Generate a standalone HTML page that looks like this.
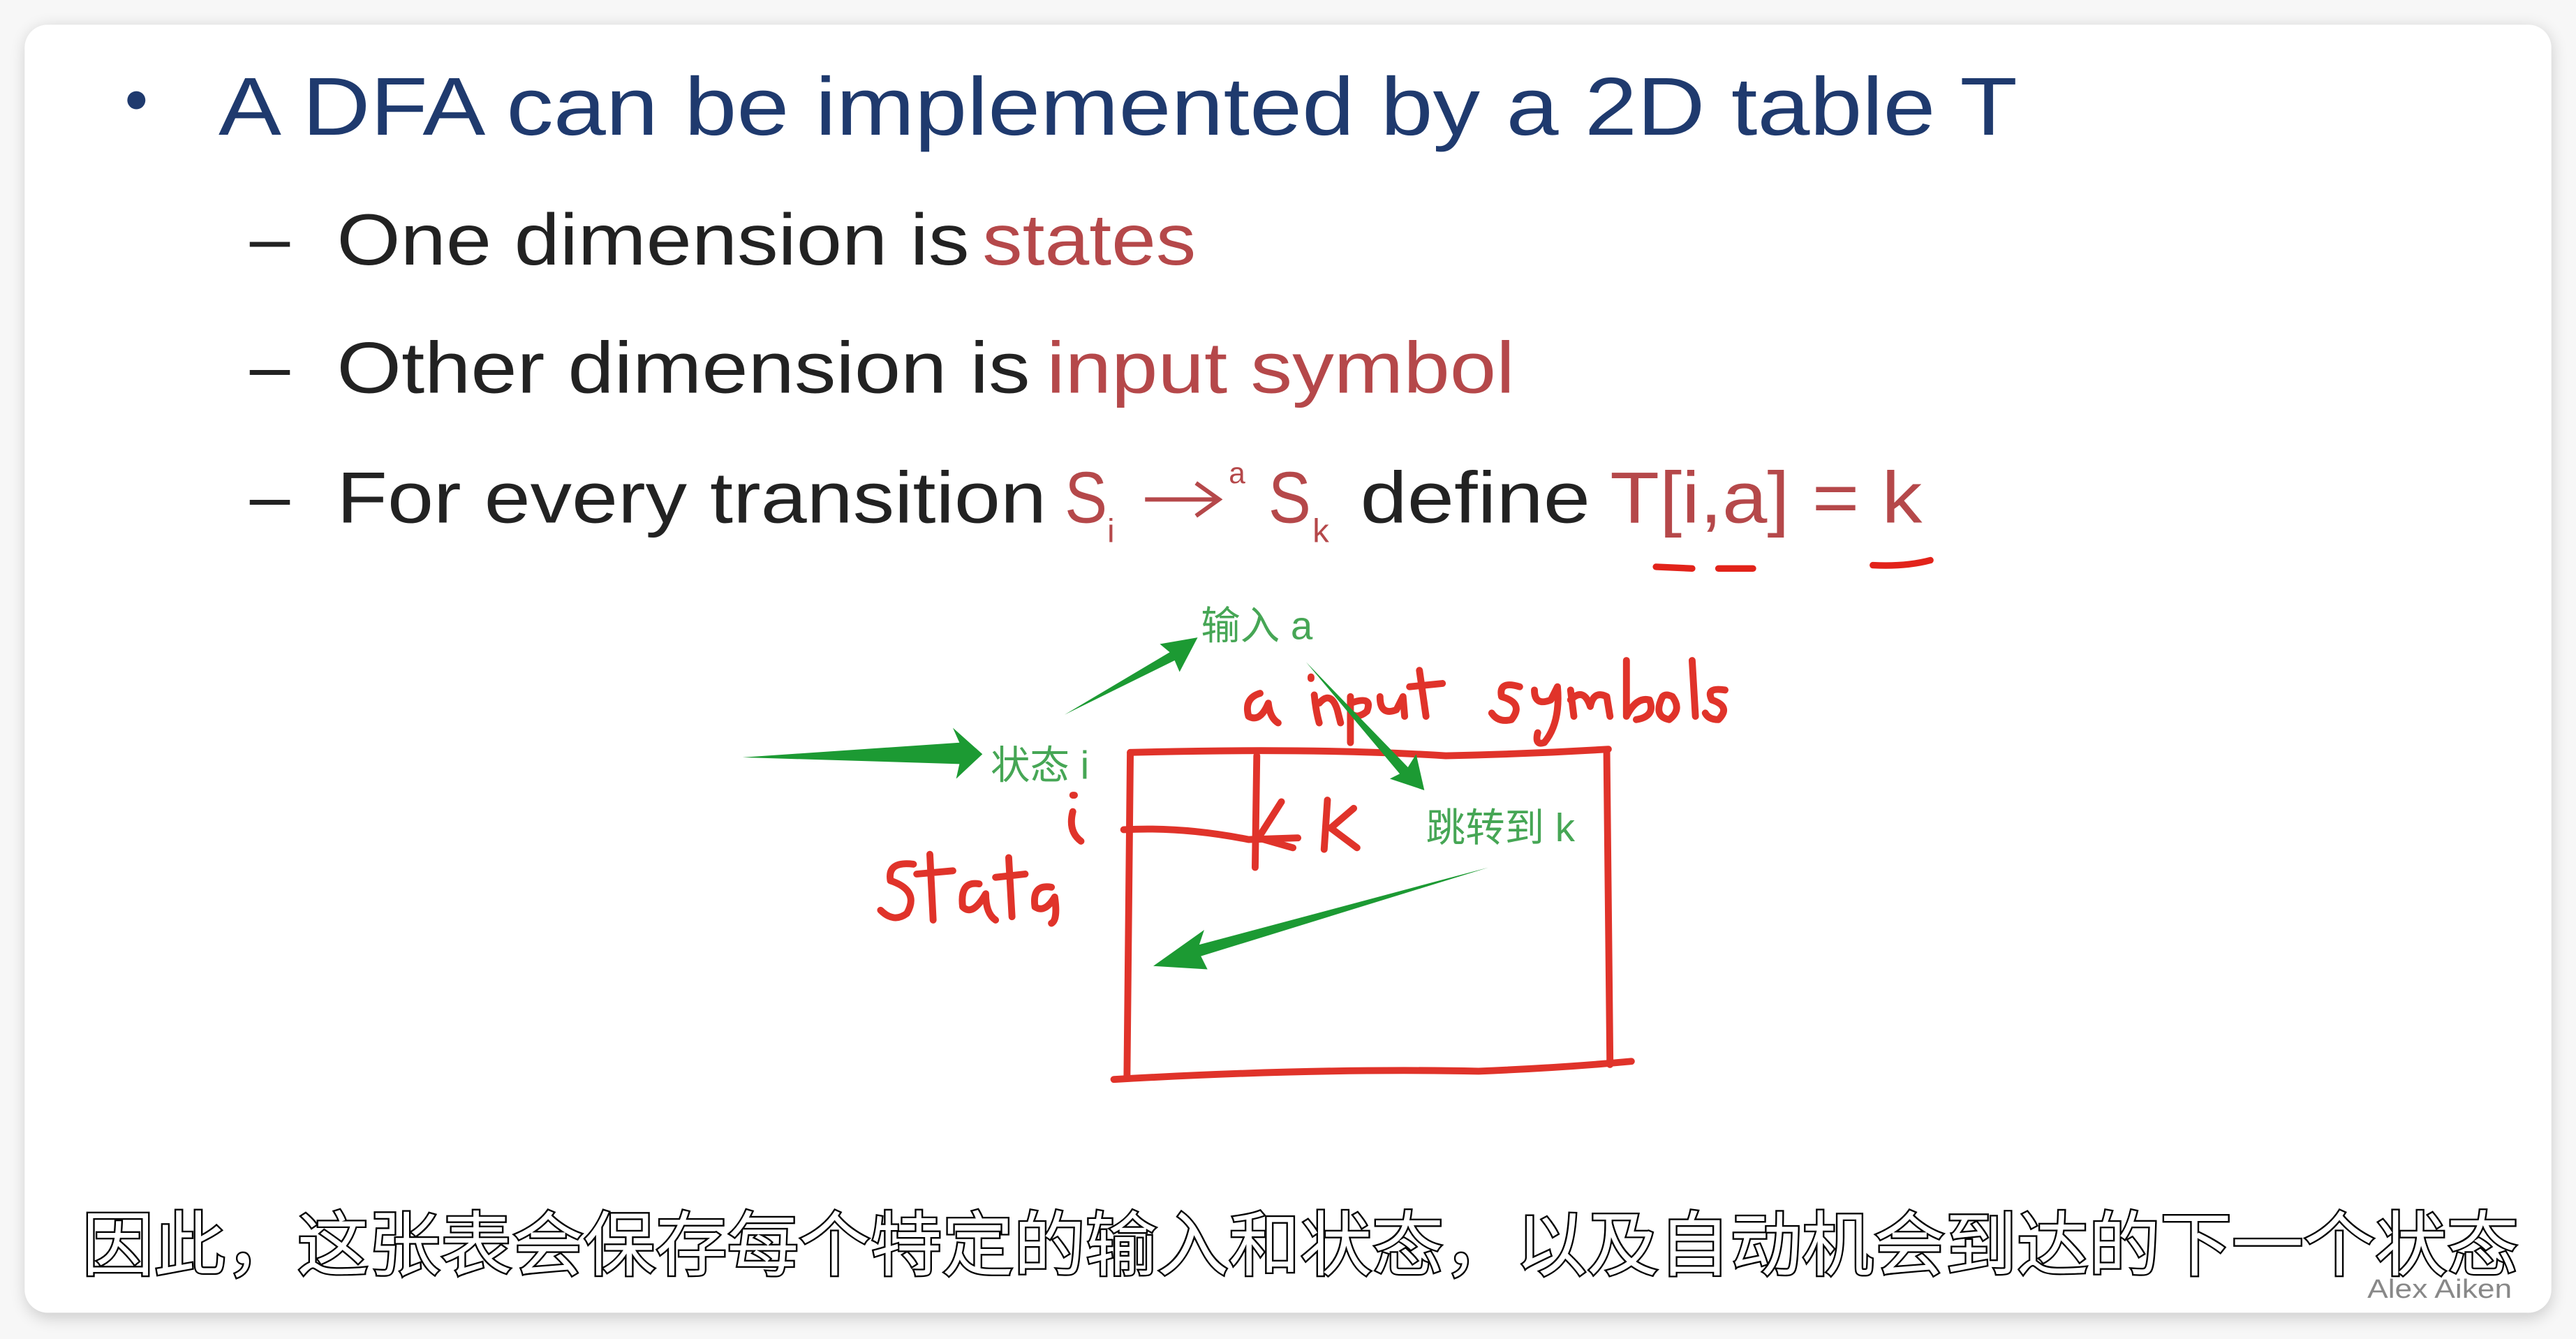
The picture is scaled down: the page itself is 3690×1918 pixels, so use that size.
<!DOCTYPE html>
<html><head><meta charset="utf-8"><style>
html,body{margin:0;padding:0;background:#fff;width:3690px;height:1918px;overflow:hidden}
svg{display:block}
</style></head><body>
<svg width="3690" height="1918" viewBox="0 0 1568 815" xmlns="http://www.w3.org/2000/svg">
<defs>
<filter id="sh" x="-5%" y="-5%" width="110%" height="110%"><feGaussianBlur stdDeviation="5"/></filter>
</defs>
<rect width="1568" height="815" fill="#f7f7f7"/>
<rect x="16" y="17" width="1537" height="785" rx="14" fill="#000" opacity="0.18" filter="url(#sh)"/>
<rect x="15" y="15" width="1538" height="784" rx="14" fill="#fff"/>

<g font-family="Liberation Sans, sans-serif">
<circle cx="83" cy="61" r="5.5" fill="#1f3a6e"/>
<text x="133" y="82" font-size="50" fill="#1f3a6e" textLength="1095" lengthAdjust="spacingAndGlyphs">A DFA can be implemented by a 2D table T</text>

<text x="152" y="160" font-size="44" fill="#222">–</text>
<text x="205" y="161" font-size="44" fill="#222" textLength="385" lengthAdjust="spacingAndGlyphs">One dimension is</text>
<text x="598" y="161" font-size="44" fill="#b5484a" textLength="130" lengthAdjust="spacingAndGlyphs">states</text>

<text x="152" y="238" font-size="44" fill="#222">–</text>
<text x="205" y="239" font-size="44" fill="#222" textLength="422" lengthAdjust="spacingAndGlyphs">Other dimension is</text>
<text x="637" y="239" font-size="44" fill="#b5484a" textLength="285" lengthAdjust="spacingAndGlyphs">input symbol</text>

<text x="152" y="317" font-size="44" fill="#222">–</text>
<text x="205" y="318" font-size="44" fill="#222" textLength="432" lengthAdjust="spacingAndGlyphs">For every transition</text>
<text x="648" y="318" font-size="44" fill="#b5484a" textLength="26" lengthAdjust="spacingAndGlyphs">S</text>
<text x="674" y="330" font-size="20" fill="#b5484a">i</text>
<path d="M697 304 L740 304 M728 294 L742 304 L728 314" stroke="#b5484a" stroke-width="2.6" fill="none"/>
<text x="748" y="294" font-size="18" fill="#b5484a">a</text>
<text x="772" y="318" font-size="44" fill="#b5484a" textLength="26" lengthAdjust="spacingAndGlyphs">S</text>
<text x="799" y="330" font-size="20" fill="#b5484a">k</text>
<text x="828" y="318" font-size="44" fill="#222" textLength="140" lengthAdjust="spacingAndGlyphs">define</text>
<text x="980" y="318" font-size="44" fill="#b5484a" textLength="190" lengthAdjust="spacingAndGlyphs">T[i,a] = k</text>
</g>

<g stroke="#e2231a" stroke-width="4" stroke-linecap="round" fill="none">
<path d="M1008 345 L1030 346"/><path d="M1046 346 L1067 346"/><path d="M1140 344 Q1160 345 1175 341"/>
</g>

<g stroke="#e0332a" stroke-width="4.2" stroke-linecap="round" stroke-linejoin="round" fill="none">
<path d="M688 458 Q800 455 880 460 Q930 459 979 456"/>
<path d="M688 458 L686 655"/>
<path d="M978 457 L980 648"/>
<path d="M678 657 Q800 650 900 652 Q950 650 993 646"/>
<path d="M765 460 L764 528"/>
<path d="M684 505 Q720 503 760 511 L790 510"/>
<path d="M780 488 L766 510 L787 516"/>
<path d="M808 487 L806 517 M824 492 L810 504 L826 516"/>
<path d="M654 484 L653 484 M653 494 Q650 506 658 512"/>
<path d="M767 422 Q757 425 760 436 Q767 440 772 428 Q773 437 778 440"/>
<path d="M798 412 L798 413 M800 423 Q801 433 803 440 M803 428 Q810 420 814 432 L816 440 M822 424 L822 452 M822 428 Q836 423 832 433 Q826 438 822 434 M840 424 Q840 436 850 432 L854 424 L855 436 M864 408 Q866 422 868 436 M858 418 L878 416"/>
<path d="M925 418 Q912 414 914 424 Q928 428 920 438 Q912 440 908 434 M934 420 Q934 430 944 426 L948 418 Q950 440 940 452 Q934 454 936 446 M956 420 L958 436 M956 426 Q964 418 968 430 Q970 420 978 424 L980 436 M990 402 L990 436 Q996 424 1004 426 Q1008 436 996 438 M1012 424 Q1006 436 1016 438 Q1024 432 1018 424 Q1014 422 1012 424 M1030 402 L1032 436 M1050 420 Q1038 418 1042 426 Q1054 430 1046 438 Q1040 438 1038 434"/>
<path d="M556 526 Q540 524 542 536 Q560 542 552 556 Q544 562 536 554 M566 520 L568 560 M558 532 L580 530 M596 538 Q584 536 586 552 Q592 558 600 544 Q600 556 606 560 M614 522 L616 558 M606 534 L624 532 M640 540 Q628 538 630 552 Q636 556 642 546 Q644 560 640 562"/>
</g>

<g fill="#1c9a33">
<path d="M452 461 L584 452 L580 443 L598 459 L582 474 L584 465 Z"/>
<path d="M648 435 L712 397 L706 392 L729 388 L718 409 L715 402 Z"/>
<path d="M795 403 L852 471 L846 474 L867 481 L862 459 L857 467 Z"/>
<path d="M906 528 L730 575 L733 566 L702 588 L735 590 L731 582 Z"/>
</g>

<g font-family="Liberation Sans, 'Noto Sans CJK SC', sans-serif" font-size="24" fill="#46a655">
<text x="731" y="389">输入 a</text>
<text x="603" y="474">状态 i</text>
<text x="868" y="512">跳转到 k</text>
</g>

<text x="1441" y="790" font-family="Liberation Sans, sans-serif" font-size="16" fill="#888" textLength="88" lengthAdjust="spacingAndGlyphs">Alex Aiken</text>

<text x="50" y="773" font-family="'Noto Sans CJK SC', sans-serif" font-size="43" fill="#fff" stroke="#000" stroke-width="2" paint-order="stroke" textLength="1483" lengthAdjust="spacingAndGlyphs">因此，这张表会保存每个特定的输入和状态，以及自动机会到达的下一个状态</text>
</svg>
</body></html>
